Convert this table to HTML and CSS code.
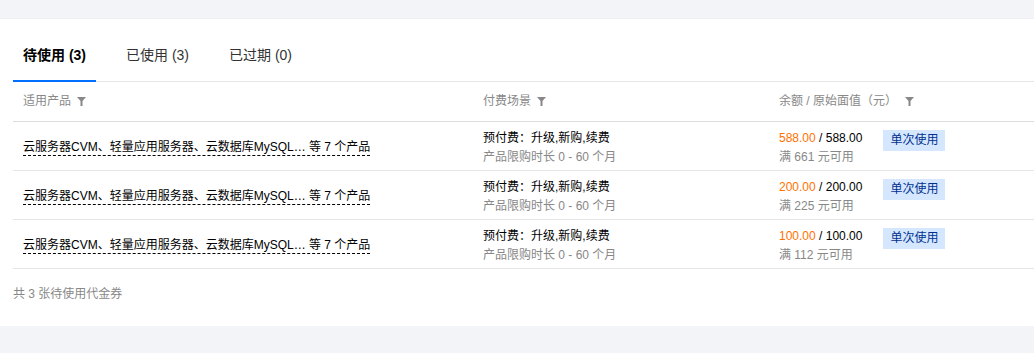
FILE: index.html
```html
<!doctype html>
<html lang="zh-CN">
    <head>
        <meta charset="UTF-8" />
        <meta name="viewport" content="width=device-width, initial-scale=1.0" />
        <title>代金券</title>
        <link rel="stylesheet" href="styles.css">
    </head>
    <body>
        <div class="card">
            <!-- Tabs -->
            <ul class="tabs">
                <li class="tab active">待使用 (3)</li>
                <li class="tab">已使用 (3)</li>
                <li class="tab">已过期 (0)</li>
            </ul>

            <!-- Voucher table -->
            <div class="table">
                <div class="row head">
                    <div class="cell">适用产品 <svg class="filter" viewBox="0 0 9 9"><path d="M0 0H9L5.5 4V9H3.5V4Z" /></svg></div>
                    <div class="cell">付费场景 <svg class="filter" viewBox="0 0 9 9"><path d="M0 0H9L5.5 4V9H3.5V4Z" /></svg></div>
                    <div class="cell">余额 / 原始面值（元） <svg class="filter wide" viewBox="0 0 9 9"><path d="M0 0H9L5.5 4V9H3.5V4Z" /></svg></div>
                </div>

                <div class="row">
                    <div class="cell"><span class="products">云服务器CVM、轻量应用服务器、云数据库MySQL… 等 7 个产品</span></div>
                    <div class="cell">
                        <div>预付费：升级,新购,续费</div>
                        <div class="sub">产品限购时长 0 - 60 个月</div>
                    </div>
                    <div class="cell balance">
                        <div>
                            <div><span class="left">588.00</span> / 588.00</div>
                            <div class="sub">满 661 元可用</div>
                        </div>
                        <span class="tag">单次使用</span>
                    </div>
                </div>

                <div class="row">
                    <div class="cell"><span class="products">云服务器CVM、轻量应用服务器、云数据库MySQL… 等 7 个产品</span></div>
                    <div class="cell">
                        <div>预付费：升级,新购,续费</div>
                        <div class="sub">产品限购时长 0 - 60 个月</div>
                    </div>
                    <div class="cell balance">
                        <div>
                            <div><span class="left">200.00</span> / 200.00</div>
                            <div class="sub">满 225 元可用</div>
                        </div>
                        <span class="tag">单次使用</span>
                    </div>
                </div>

                <div class="row">
                    <div class="cell"><span class="products">云服务器CVM、轻量应用服务器、云数据库MySQL… 等 7 个产品</span></div>
                    <div class="cell">
                        <div>预付费：升级,新购,续费</div>
                        <div class="sub">产品限购时长 0 - 60 个月</div>
                    </div>
                    <div class="cell balance">
                        <div>
                            <div><span class="left">100.00</span> / 100.00</div>
                            <div class="sub">满 112 元可用</div>
                        </div>
                        <span class="tag">单次使用</span>
                    </div>
                </div>
            </div>

            <div class="footer">共 3 张待使用代金券</div>
        </div>
    </body>
</html>
```

FILE: styles.css
```css
* {
    box-sizing: border-box;
}

body {
    margin: 0;
    padding-top: 19px;
    background: #f3f4f7;
    font-family: "Liberation Sans", Arial, "Noto Sans CJK SC", sans-serif;
    font-size: 12px;
    color: #000;
    overflow: hidden;
}

.card {
    background: #fff;
    padding: 20px 0 0 13px;
    box-shadow: 0 2px 3px rgba(54, 58, 80, 0.3);
}

.tabs {
    display: flex;
    gap: 20px;
    margin: 0;
    padding: 0;
    list-style: none;
    border-bottom: 1px solid #e5e5e5;
}

.tab {
    padding: 5px 10px 14px;
    line-height: 22px;
    font-size: 14px;
    color: #333;
    margin-bottom: -1px;
    border-bottom: 2px solid transparent;
}

.tab.active {
    color: #000;
    font-weight: bold;
    border-bottom-color: #006eff;
}

.row {
    display: grid;
    grid-template-columns: 460px 296px 1fr;
    border-bottom: 1px solid #e5e5e5;
    height: 49px;
}

.row.head {
    height: 40px;
    border-bottom-color: #ddd;
    color: #888;
}

.cell {
    padding: 7px 10px 0;
    line-height: 19px;
}

.head .cell {
    display: flex;
    align-items: center;
    gap: 6px;
    padding-top: 0;
}

.filter {
    width: 9px;
    height: 9px;
    fill: #888;
}

.filter.wide {
    margin-left: 2px;
}

.row:not(.head) .cell:first-child {
    display: flex;
    align-items: center;
    padding-top: 0;
}

.products {
    border-bottom: 1px dashed #000;
    line-height: 16px;
    margin-top: 2px;
}

.sub {
    color: #888;
}

.left {
    color: #ff7200;
}

.balance {
    display: flex;
    gap: 21px;
    align-items: flex-start;
}

.tag {
    margin-top: 1px;
    padding: 0 7px;
    line-height: 21px;
    background: #d5e7ff;
    color: #00318f;
}

.footer {
    padding: 18px 0 25px;
    line-height: 14px;
    color: #888;
}
```
